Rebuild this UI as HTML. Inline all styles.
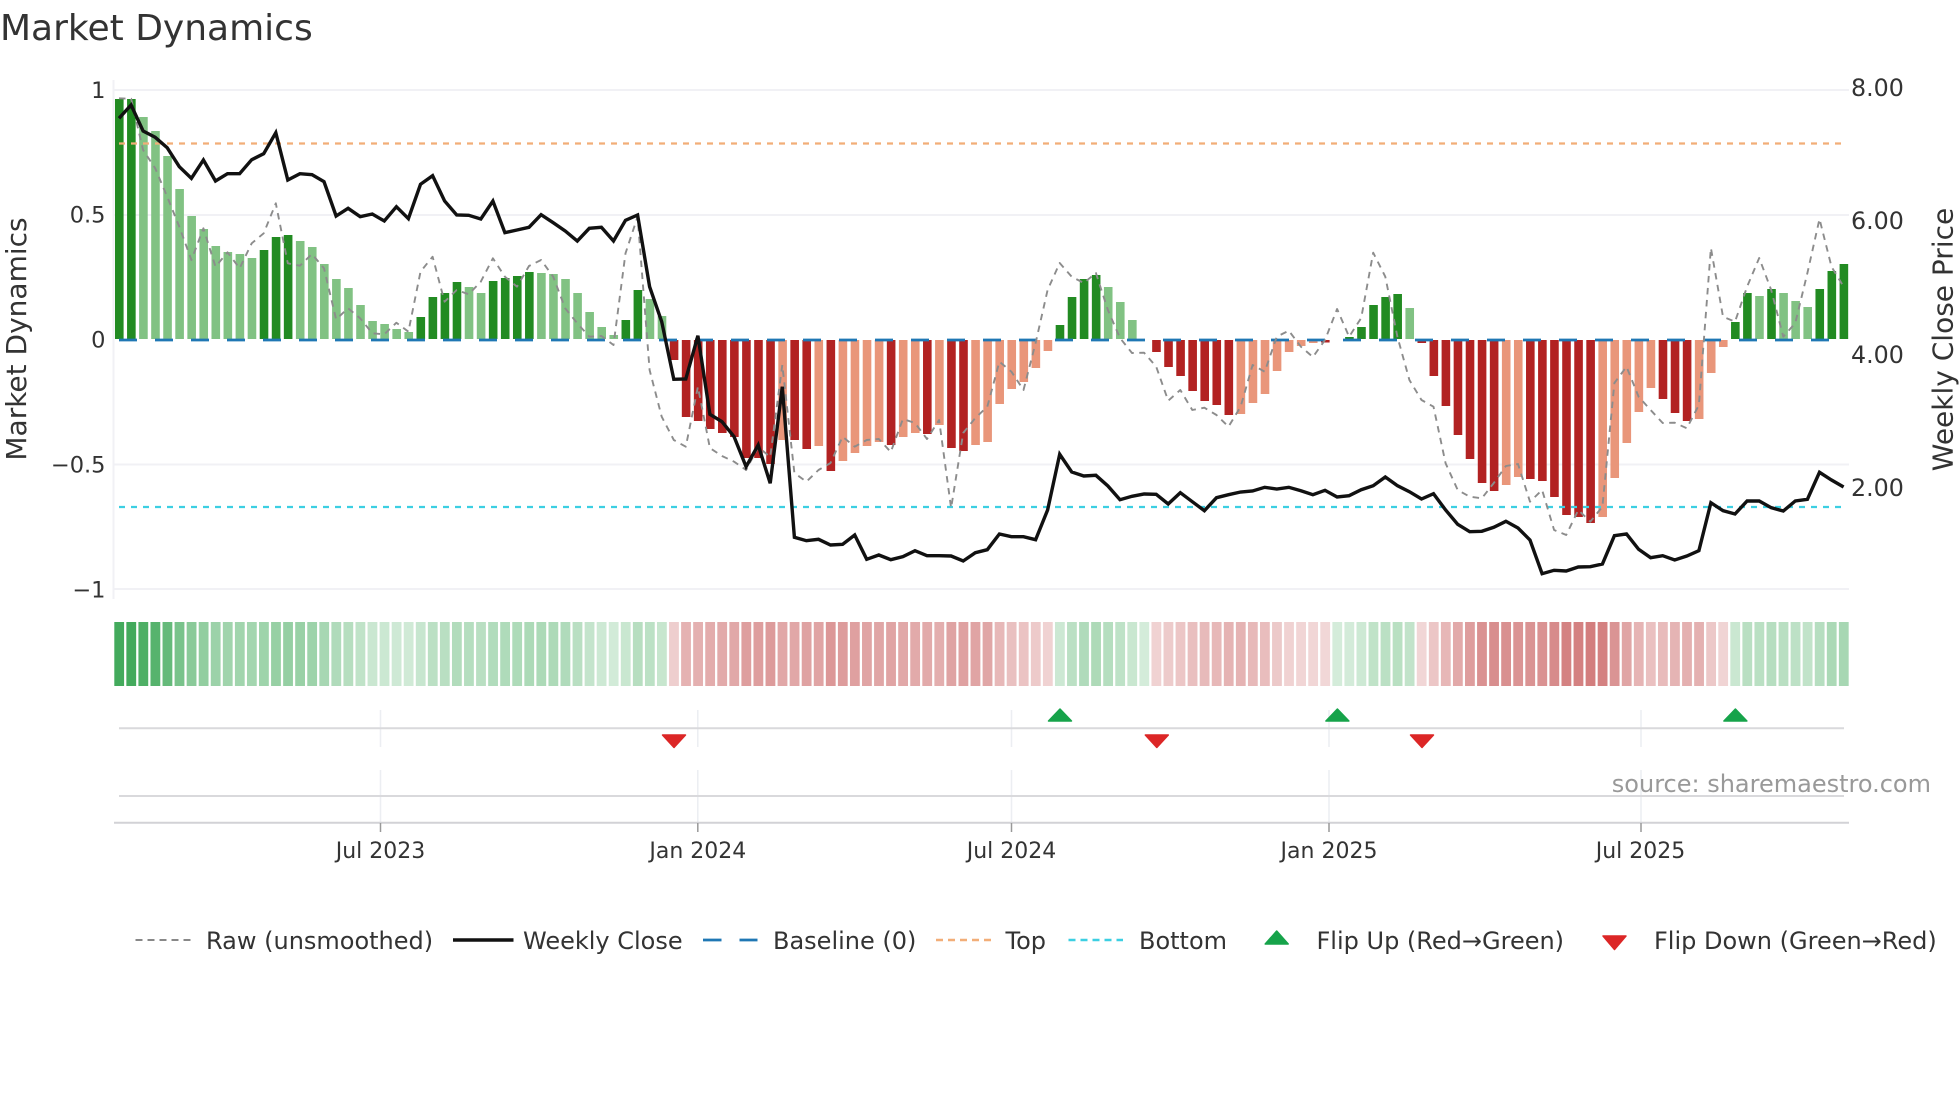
<!DOCTYPE html>
<html lang="en">
<head>
<meta charset="utf-8">
<title>Market Dynamics</title>
<style>
html,body{margin:0;padding:0;background:#fff;width:1960px;height:1102px;overflow:hidden}
svg{display:block}
text{font-family:"DejaVu Sans","Liberation Sans",sans-serif}
</style>
</head>
<body>
<svg xmlns="http://www.w3.org/2000/svg" width="1960" height="1102" viewBox="0 0 1960 1102">
<rect width="1960" height="1102" fill="#fff"/>
<text x="0" y="40" font-size="36" fill="#333">Market Dynamics</text>

<g stroke="#f1f1f5" stroke-width="2" fill="none">
<path d="M113.5 80V599"/>
<path d="M114 90H1849M114 215H1849M114 464.5H1849M114 589H1849"/>
</g>

<g font-size="22.500" fill="#333" text-anchor="end">
<text x="105.500" y="98">1</text>
<text x="105.500" y="222.500">0.5</text>
<text x="105.500" y="347.500">0</text>
<text x="105.500" y="472.500">−0.5</text>
<text x="105.500" y="597.500">−1</text>
</g>
<g font-size="23.750" fill="#333">
<text x="1851" y="96">8.00</text>
<text x="1851" y="229">6.00</text>
<text x="1851" y="363">4.00</text>
<text x="1851" y="496">2.00</text>
</g>
<text transform="translate(26 339) rotate(-90)" text-anchor="middle" font-size="28" fill="#333">Market Dynamics</text>
<text transform="translate(1952.500 339.500) rotate(-90)" text-anchor="middle" font-size="28" fill="#333">Weekly Close Price</text>

<g id="bars"></g>
<path d="M119 340H1844" stroke="#1f77b4" stroke-width="2.800" stroke-dasharray="18 18" fill="none"/>
<path d="M119 143.500H1844" stroke="#f2ae78" stroke-width="2.300" stroke-dasharray="6 6" fill="none"/>
<path d="M119 507H1844" stroke="#3ccfe2" stroke-width="2.300" stroke-dasharray="6 6" fill="none"/>
<polyline id="raw" fill="none" stroke="#8c8c8c" stroke-width="1.900" stroke-dasharray="6.500 5.500" stroke-linejoin="round"/>
<polyline id="close" fill="none" stroke="#111" stroke-width="3.400" stroke-linejoin="miter"/>

<g id="heat"></g>

<g stroke="#eceef2" stroke-width="1.500" fill="none">
<path d="M380.500 710V747M697.800 710V747M1011.500 710V747M1329 710V747M1641 710V747"/>
<path d="M380.500 770V822M697.800 770V822M1011.500 770V822M1329 770V822M1641 770V822"/>
</g>
<g stroke="#d9d9dc" stroke-width="2" fill="none">
<path d="M119 728.300H1844M119 796H1844"/>
<path d="M114 822.700H1849" stroke="#d2d2d6"/>
</g>
<path d="M380.500 823V832M697.800 823V832M1011.500 823V832M1329 823V832M1641 823V832" stroke="#999" stroke-width="1.500" fill="none"/>

<g fill="#16a34a" stroke="#16a34a" stroke-width="1.500" stroke-linejoin="round">
<path d="M1060 709L1071.500 721H1048.500Z"/>
<path d="M1337.400 709L1348.900 721H1325.900Z"/>
<path d="M1735.400 709L1746.900 721H1723.900Z"/>
<path d="M1276.700 931L1288.200 944H1265.200Z"/>
</g>
<g fill="#dc2626" stroke="#dc2626" stroke-width="1.500" stroke-linejoin="round">
<path d="M662.500 735H685.500L674 747.500Z"/>
<path d="M1145.300 735H1168.300L1156.800 747.500Z"/>
<path d="M1410.500 735H1433.500L1422 747.500Z"/>
<path d="M1603 936H1626L1614.500 949.500Z"/>
</g>

<g font-size="22" fill="#333" text-anchor="middle">
<text x="380.500" y="858">Jul 2023</text>
<text x="697.800" y="858">Jan 2024</text>
<text x="1011.500" y="858">Jul 2024</text>
<text x="1329" y="858">Jan 2025</text>
<text x="1640.500" y="858">Jul 2025</text>
</g>

<text x="1931" y="792" font-size="24" fill="#999" text-anchor="end">source: sharemaestro.com</text>

<g fill="none">
<path d="M135.500 940H191" stroke="#888" stroke-width="2" stroke-dasharray="7 5"/>
<path d="M453 940H513.500" stroke="#111" stroke-width="3.400"/>
<path d="M703 940H757.500" stroke="#1f77b4" stroke-width="2.800" stroke-dasharray="18.500 18"/>
<path d="M936 940H991" stroke="#f2ae78" stroke-width="2.500" stroke-dasharray="7 5"/>
<path d="M1068.500 940H1123" stroke="#3ccfe2" stroke-width="2.500" stroke-dasharray="7 5"/>
</g>
<g font-size="24" fill="#333">
<text x="206" y="949">Raw (unsmoothed)</text>
<text x="523" y="949">Weekly Close</text>
<text x="773" y="949">Baseline (0)</text>
<text x="1005.500" y="949">Top</text>
<text x="1139" y="949">Bottom</text>
<text x="1316.500" y="949">Flip Up (Red→Green)</text>
<text x="1654" y="949">Flip Down (Green→Red)</text>
</g>
</svg>
<script>
(function(){
var NS="http://www.w3.org/2000/svg";
var B=[99,99,117,131,156,189,216,229,246,252,254,258,250,237,235,241,247,264,279,288,305,321,324,329,332,317,297,293,282,287,293,281,278,276,272,273,274,279,293,312,327,335,320,290,299,316,
360,417,421,429,433,437,458,458,464,440,440,449,446,471,461,453,446,442,445,437,433,434,425,448,451,445,442,404,389,382,368,351,
325,297,279,275,287,302,320,339,
352,367,376,391,401,405,415,414,403,394,371,352,346,343,342.500,339,
337,327,305,297,294,308,
343,376,406,435,459,483,491,485,477,479,481,497,515,517,523,517,478,443,412,388,399,413,421,419,373,347,
322,293,296,289,293,301,307,289,271,264];
var F=("11 0000000000 111 0000000000 1111 00 1111 0000000 11 00 111111111 0 11 0 1 0000 1 00 1 0 11 0000000 1111 000 0 1111111 0000000 1 0 11111 0 1111111 00 111111 00000 111 000 11 0 1 000 111").replace(/ /g,"");
var C=[118.3,105,131,137.3,147.7,166.7,178.3,160,181,173.7,173.7,159.7,153.7,132.7,180,173.7,174.7,181.7,216,208.3,216.7,214,221,206.7,218.7,184.3,175.7,201,215,215.3,219,201,232.7,230,227.3,214.7,222.7,231,241,228.3,227.3,241,220.3,215,286.7,321.7,379.3,379,335.7,414.3,421.7,436.7,466.7,445,483.3,386.7,537.3,540.7,539.3,545,544.3,535,559.3,555,559.7,556.7,550.7,555.7,555.7,556,561,552.7,549.7,534,536.7,536.7,539.7,510,454.3,472,476,475.3,486,499.7,496.3,494,494.3,504,492.7,501.7,510.7,497.7,494.7,492,491,487.3,489,487.3,490.7,494.7,490.3,497,495.7,489.7,485.7,477,485.7,491.7,499,493.7,510,524.3,531.7,531.3,527.3,521.3,528,540,573.7,570.3,571,567,566.7,564,535.7,534,549.3,557.7,555.7,560,556,550.7,502.7,510.7,514,501,501,507.7,511,501,499.3,472.3,480,487];
var R=[98.3,98.7,150,168.3,196.7,226.7,260,228.3,266.7,252.3,268.3,243.3,233.3,203.3,263.3,265.7,254,268.3,319.3,308.3,318.3,333.3,334.3,322.7,331.7,271.7,256.7,301.7,290,294.3,281.7,258.3,276.7,286.7,266,260,276.7,308.3,323.3,336.7,336,345,253.3,216.7,370,416.7,440,446.7,386.7,448,456,461.7,470,447,457,365,473,481.7,470,463,436.7,446.7,440,439,452,419,423,439,420,508,433,418,406.7,361.7,371.7,390,343,290,263,276.7,283,273,310,338,353,352.7,366.7,400.7,390,410,407.7,415,426.7,406.7,365,371.7,336.7,330.7,346.7,357,340,309,336.7,318,252.7,276.7,336.7,380,400,406.7,463.3,490,496.7,498.3,483,466,464,501.7,490,530,535,510,521.7,506.7,383,366.7,396.7,410,423,422.7,428.3,405,248,316.7,321.7,286.7,258,290,336.7,323,273,219,266.7,286.7];
var bars=document.getElementById("bars"),heat=document.getElementById("heat");
function rect(p,x,y,w,h,f){var r=document.createElementNS(NS,"rect");r.setAttribute("x",x.toFixed(2));r.setAttribute("y",y.toFixed(2));r.setAttribute("width",w);r.setAttribute("height",h.toFixed(2));r.setAttribute("fill",f);p.appendChild(r);}
for(var i=0;i<B.length;i++){
 var y=B[i],up=y<339.5,d=F.charAt(i)==="1",x=115+12.06*i;
 if(Math.abs(y-339.5)>=2){
  if(up)rect(bars,x,y,8.6,339-y,d?"#228b22":"#81c283");
  else rect(bars,x,340,8.6,y-340,d?"#b22222":"#e9967a");
 }
 var v=Math.abs(y-339.5)/250,a,c;
 if(up){a=0.2+0.72*v;c=[44,160,72];}else{a=0.19+0.6*v;c=[185,50,50];}
 var col="rgb("+Math.round(255-(255-c[0])*a)+","+Math.round(255-(255-c[1])*a)+","+Math.round(255-(255-c[2])*a)+")";
 rect(heat,114.3+12.06*i,622,9.8,64,col);
}
function pts(A){return A.map(function(v,i){return (119+12.06*i).toFixed(1)+","+v;}).join(" ");}
document.getElementById("raw").setAttribute("points",pts(R));
document.getElementById("close").setAttribute("points",pts(C));
})();
</script>
</body>
</html>
